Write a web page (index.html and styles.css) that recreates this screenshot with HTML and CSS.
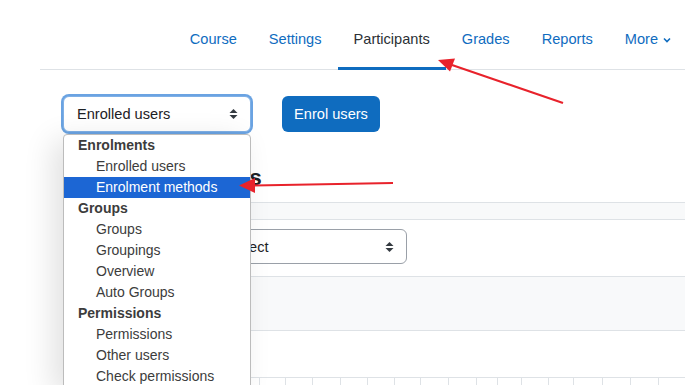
FILE: index.html
```html
<!DOCTYPE html>
<html lang="en">
<head>
<meta charset="UTF-8" />
<title>Participants</title>
<link rel="stylesheet" href="styles.css">
</head>
<body>

  <!-- Secondary navigation -->
  <nav class="tabs">
    <a href="#">Course</a>
    <a href="#">Settings</a>
    <a href="#" class="active">Participants</a>
    <a href="#">Grades</a>
    <a href="#">Reports</a>
    <a href="#" class="more">More
      <svg width="8" height="6" viewBox="0 0 8 6"><polyline points="1,1.5 4,4.5 7,1.5" fill="none" stroke="currentColor" stroke-width="1.6"/></svg>
    </a>
  </nav>

  <div class="content">
    <!-- Toolbar with the open jump menu -->
    <div class="toolbar">
      <div class="picker">
        <div class="select focused">
          <span>Enrolled users</span>
          <svg class="updown" width="9" height="12" viewBox="0 0 9 12"><path d="M4.5 1 L8.5 5 H0.5 Z M4.5 11 L8.5 7 H0.5 Z" fill="#343a40"/></svg>
        </div>
        <ul class="options">
          <li class="group">Enrolments</li>
          <li>Enrolled users</li>
          <li class="selected">Enrolment methods</li>
          <li class="group">Groups</li>
          <li>Groups</li>
          <li>Groupings</li>
          <li>Overview</li>
          <li>Auto Groups</li>
          <li class="group">Permissions</li>
          <li>Permissions</li>
          <li>Other users</li>
          <li>Check permissions</li>
        </ul>
      </div>
      <button class="btn">Enrol users</button>
    </div>

    <h2 class="page-title">Enrolled users</h2>

    <!-- Filter area, mostly hidden behind the menu -->
    <div class="filter">
      <div class="band"></div>
      <div class="row">
        <span class="match">Match</span>
        <div class="select small">
          <span>Select</span>
          <svg class="updown" width="9" height="12" viewBox="0 0 9 12"><path d="M4.5 1 L8.5 5 H0.5 Z M4.5 11 L8.5 7 H0.5 Z" fill="#343a40"/></svg>
        </div>
      </div>
      <div class="band tall"></div>
      <div class="row blank"></div>
      <div class="initials">
        <span class="label">First name</span>
        <span>All</span><span>A</span><span>B</span><span>C</span><span>D</span><span>E</span><span>F</span>
        <span>G</span><span>H</span><span>I</span><span>J</span><span>K</span><span>L</span><span>M</span>
        <span>N</span><span>O</span><span>P</span><span>Q</span><span>R</span><span>S</span><span>T</span>
        <span>U</span><span>V</span><span>W</span>
      </div>
    </div>
  </div>

  <!-- Red annotation arrows drawn over the screenshot -->
  <svg class="annotations" width="685" height="385" viewBox="0 0 685 385">
    <line x1="563" y1="103" x2="452" y2="65" stroke="#e8222b" stroke-width="2.2"/>
    <polygon points="438,60 455,58.5 450,71.5" fill="#e8222b"/>
    <line x1="393" y1="183" x2="253" y2="185.5" stroke="#e8222b" stroke-width="2.2"/>
    <polygon points="239,185.5 255,178 255,193" fill="#e8222b"/>
  </svg>

</body>
</html>
```

FILE: styles.css
```css
:root {
  --azul: #0f6cbf;
  --texto: #1d2125;
  --linha: #dee2e6;
  --cinza: #f8f9fa;
}

* {
  margin: 0;
  padding: 0;
  box-sizing: border-box;
  font-family: 'Liberation Sans', Arial, sans-serif;
}

body {
  background: white;
  color: var(--texto);
  width: 685px;
  height: 385px;
  overflow: hidden;
  position: relative;
}

/* Tabs */
.tabs {
  display: flex;
  justify-content: flex-end;
  margin-left: 40px;
  margin-right: -2px;
  padding-top: 18px;
  border-bottom: 1px solid var(--linha);
}

.tabs a {
  display: flex;
  align-items: center;
  gap: 5px;
  padding: 11px 16px 17px;
  line-height: 21px;
  font-size: 14.6px;
  color: var(--azul);
  text-decoration: none;
  border-bottom: 3px solid transparent;
  margin-bottom: -1px;
}

.tabs a.active {
  color: #2b3035;
  border-bottom-color: var(--azul);
}

/* Content */
.content {
  padding-left: 63px;
}

.toolbar {
  display: flex;
  align-items: flex-start;
  gap: 31px;
  margin-top: 26px;
}

.picker {
  position: relative;
}

.select {
  display: flex;
  align-items: center;
  justify-content: space-between;
  width: 188px;
  height: 36px;
  padding: 0 12px 0 13px;
  border: 1px solid #8f959e;
  border-radius: 6px;
  font-size: 14.6px;
  color: var(--texto);
  background: white;
}

.select.focused {
  border-color: #7fb0e6;
  box-shadow: 0 0 0 2px #6aa3e2;
}

.options {
  position: absolute;
  top: 38px;
  left: 0;
  width: 188px;
  list-style: none;
  background: white;
  border: 1px solid #bcbcbc;
  border-radius: 4px 4px 0 0;
  box-shadow: -10px 6px 30px rgba(0,0,0,0.12);
  z-index: 10;
}

.options li {
  height: 21px;
  line-height: 21px;
  padding-left: 32px;
  font-size: 14px;
  color: #3c3c3c;
  white-space: nowrap;
}

.options li.group {
  padding-left: 14px;
  font-weight: 700;
}

.options li.selected {
  background: #1c66d4;
  color: white;
}

.btn {
  height: 36px;
  width: 98px;
  border: none;
  border-radius: 6px;
  background: var(--azul);
  color: white;
  font-size: 14.6px;
}

.page-title {
  margin: 32px 0 0 46px;
  height: 38px;
  font-size: 22px;
  font-weight: 700;
  line-height: 28px;
  white-space: nowrap;
}

/* Filter area */
.filter {
  margin-right: -2px;
  border-top: 1px solid var(--linha);
}

.filter .band {
  height: 17px;
  background: var(--cinza);
  border-bottom: 1px solid var(--linha);
}

.filter .band.tall {
  height: 54px;
}

.filter .row {
  display: flex;
  align-items: flex-start;
  gap: 14px;
  height: 57px;
  padding: 9px 0 0 80px;
  border-bottom: 1px solid var(--linha);
}

.filter .row .match {
  font-size: 14.6px;
  line-height: 35px;
  width: 57px;
}

.filter .row.blank {
  height: 47px;
  padding: 0;
}

.select.small {
  width: 193px;
  height: 35px;
  border-color: #9aa0a8;
}

.initials {
  display: flex;
  height: 30px;
  padding-left: 110px;
}

.initials span {
  padding: 8px 8px;
  border-left: 1px solid var(--linha);
  font-size: 14.6px;
  color: var(--azul);
}

.initials span.label {
  border-left: none;
  color: var(--texto);
}

/* Annotations */
.annotations {
  position: absolute;
  top: 0;
  left: 0;
  z-index: 20;
  pointer-events: none;
}
```
